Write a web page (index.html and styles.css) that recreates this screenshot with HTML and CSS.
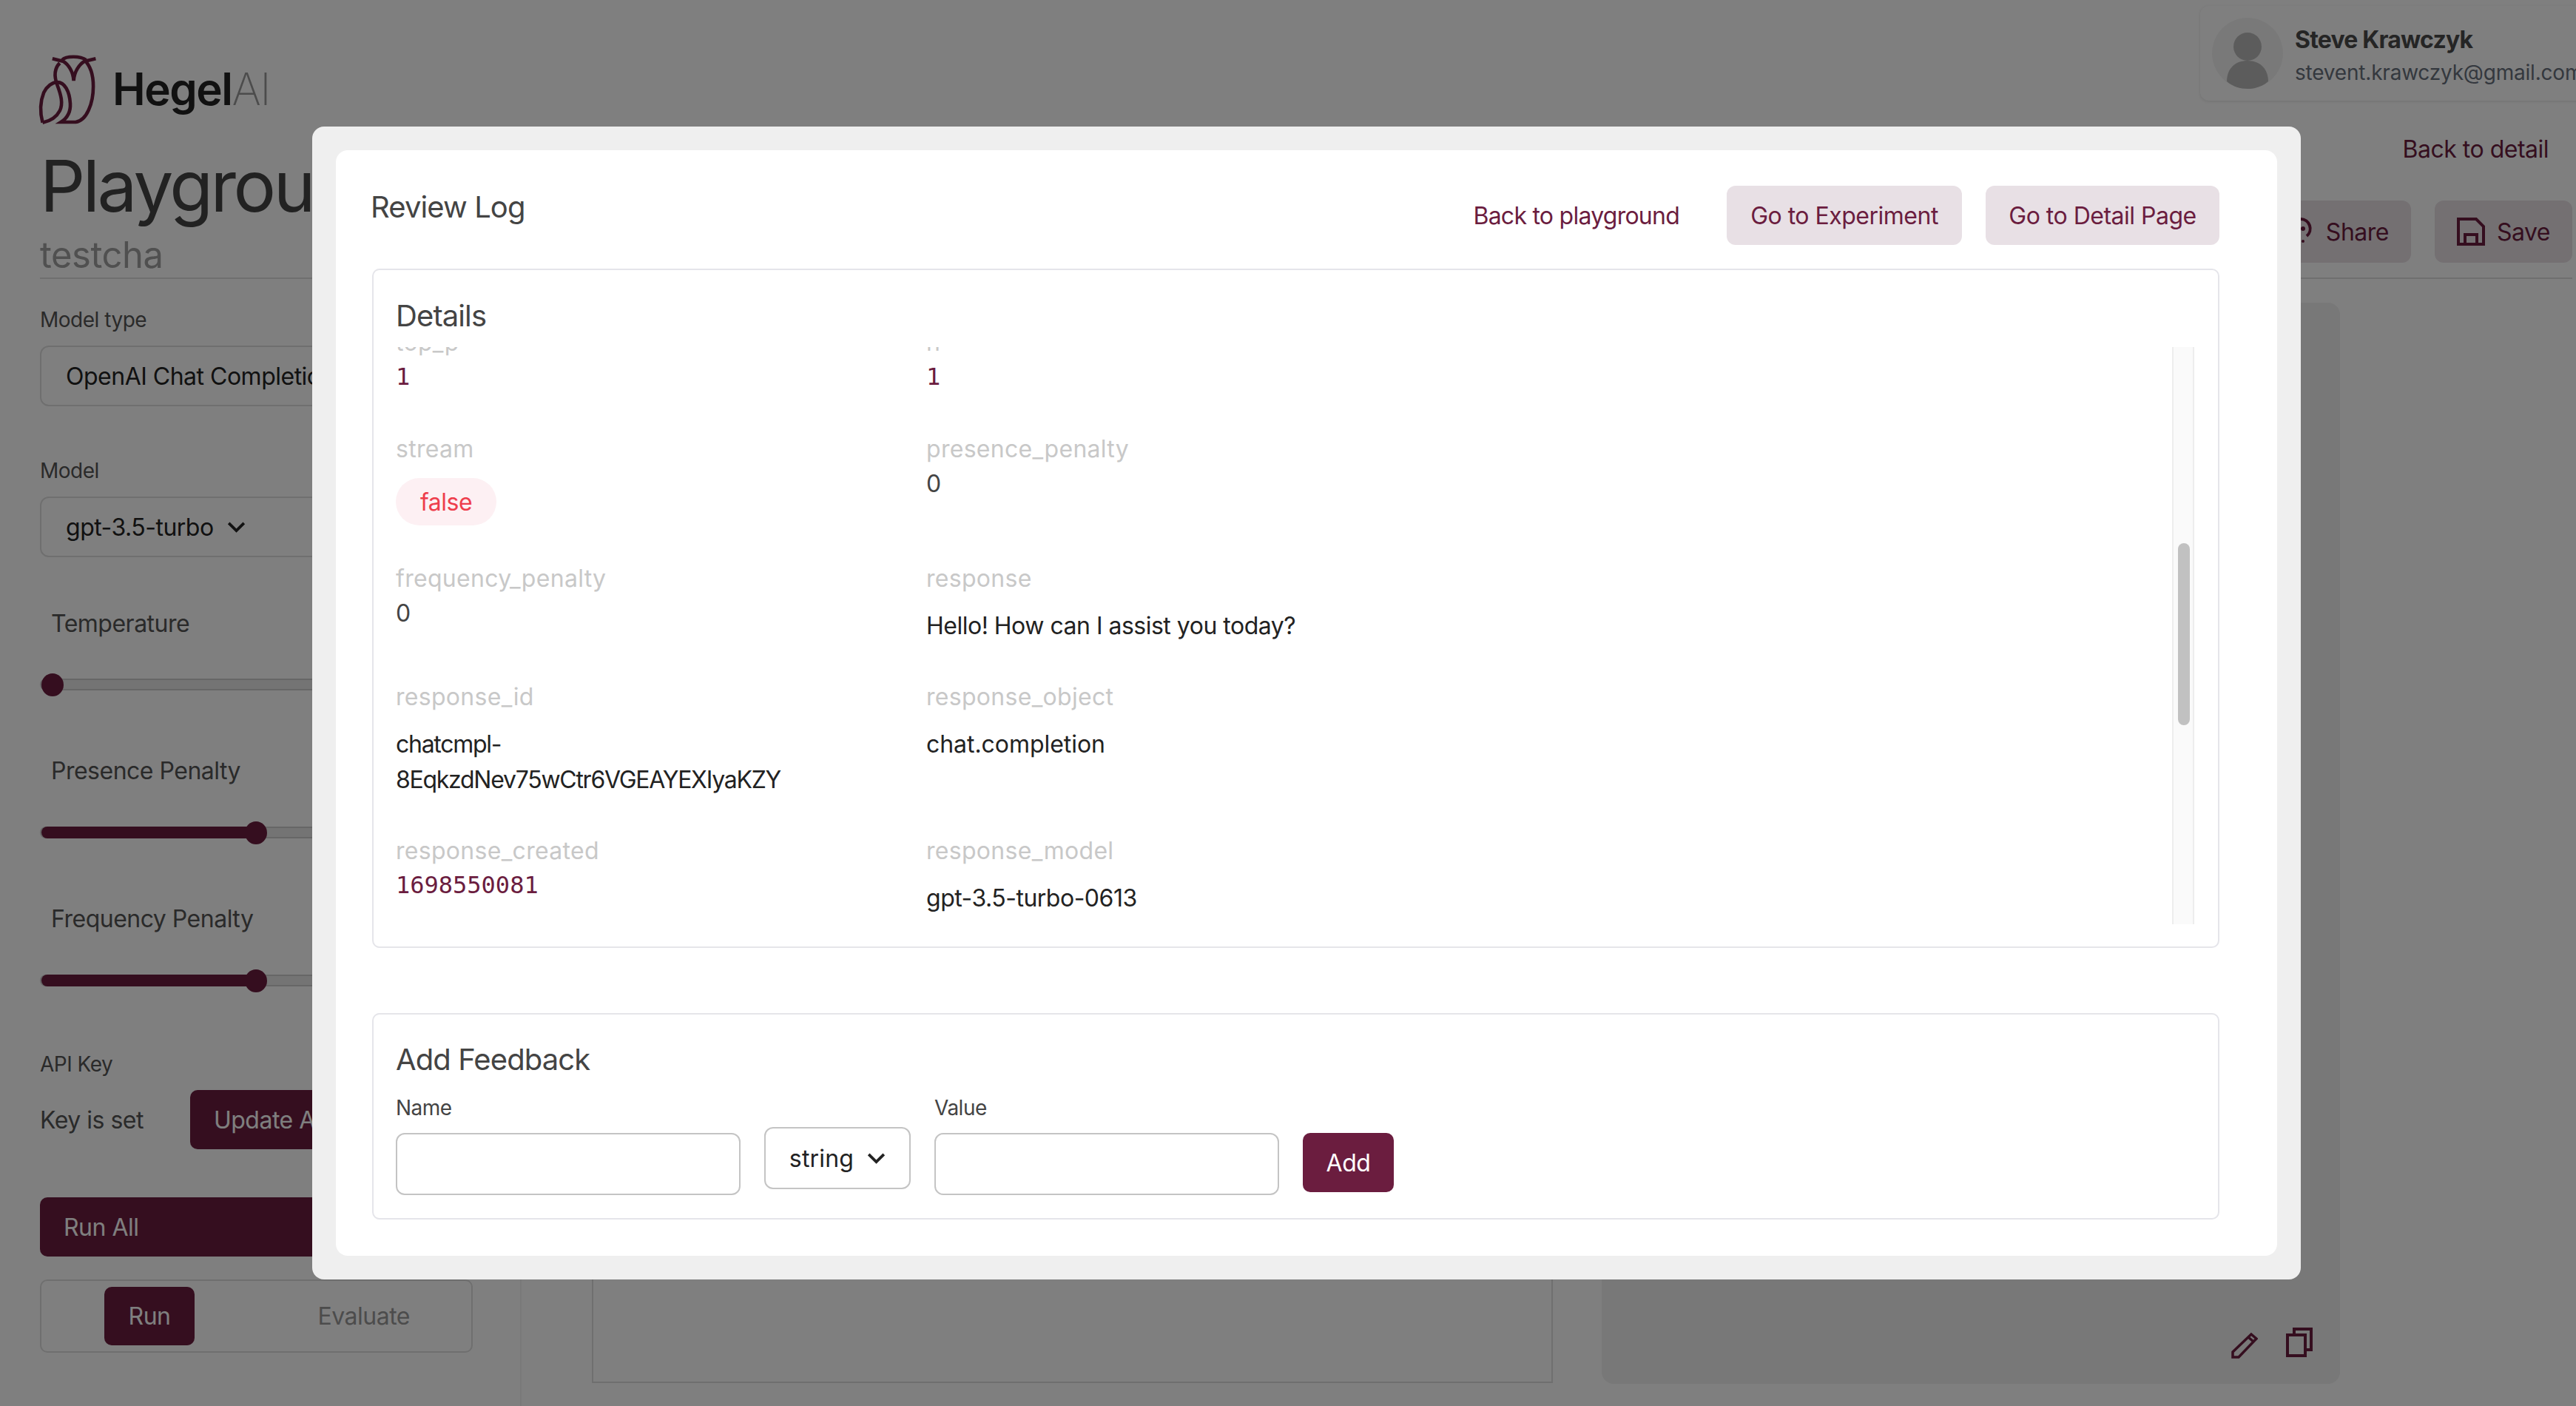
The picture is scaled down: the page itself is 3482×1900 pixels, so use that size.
FILE: index.html
```html
<!DOCTYPE html>
<html lang="en">

<head>
    <meta charset="UTF-8">
    <title>Playground - Hegel AI</title>
    <link rel="stylesheet" href="styles.css">
</head>

<body>
    <div class="page">
        <header class="topbar">
            <div class="logo">
                <svg class="logo-owl" viewBox="45 38 228 284" fill="none" stroke="#6b1d3f" stroke-width="14">
                    <path d="M95 57 L140 68 C160 80 180 110 182 147 C184 110 205 80 225 68 L272 57" />
                    <path d="M135 62 C150 45 210 45 232 62" />
                    <path d="M55 318 C45 280 42 240 60 195 C72 170 95 153 115 153 C145 153 165 190 168 240 C170 275 155 300 130 316 H190 C235 310 262 240 262 170 C262 120 250 85 225 62" />
                    <path d="M125 75 C105 95 100 125 115 165 C130 205 140 240 125 270 C112 295 85 312 55 318" />
                </svg>
                <span class="logo-name">Hegel<span class="logo-ai">AI</span></span>
            </div>
            <div class="user-chip">
                <svg class="avatar" viewBox="0 0 96 96">
                    <circle cx="48" cy="48" r="48" fill="#f3f3f3" />
                    <ellipse cx="48" cy="39" rx="19" ry="19" fill="#b9b9b9" />
                    <path d="M20 86 C20 68 32 58 48 58 C64 58 76 68 76 86 C68 93 58 96 48 96 C38 96 28 93 20 86 Z" fill="#b9b9b9" />
                </svg>
                <div class="user-text">
                    <div class="user-name">Steve Krawczyk</div>
                    <div class="user-email">stevent.krawczyk@gmail.com</div>
                </div>
            </div>
        </header>

        <section class="titlebar">
            <div>
                <h1>Playground</h1>
                <div class="subtitle">testcha</div>
            </div>
            <div class="title-actions">
                <a class="back-link">Back to detail</a>
                <div class="action-row">
                    <button class="light-btn share-btn">
                        <svg viewBox="0 0 28 38" fill="none" stroke="#6b1d3f" stroke-width="4">
                            <path d="M10 2 A13 13 0 0 1 18 25" />
                            <circle cx="13" cy="15" r="3" fill="#6b1d3f" stroke="none" />
                            <circle cx="13" cy="32" r="2" fill="#6b1d3f" stroke="none" />
                        </svg>
                        Share
                    </button>
                    <button class="light-btn">
                        <svg viewBox="0 0 38 38" fill="none" stroke="#6b1d3f" stroke-width="4">
                            <path d="M2 2 H26 L36 12 V36 H2 Z" />
                            <path d="M11 36 V23 H27 V36" />
                        </svg>
                        Save
                    </button>
                </div>
            </div>
        </section>

        <div class="workspace">
            <aside class="sidebar">
                <label class="field-label">Model type</label>
                <div class="select-box">OpenAI Chat Completion</div>

                <label class="field-label model-label">Model</label>
                <div class="select-box">gpt-3.5-turbo
                    <svg class="chevron" viewBox="0 0 26 16" fill="none" stroke="#222" stroke-width="4">
                        <path d="M2 2 L13 13 L24 2" />
                    </svg>
                </div>

                <div class="slider-label first">Temperature</div>
                <div class="slider first"><span class="slider-fill empty"></span><span class="slider-thumb"></span></div>

                <div class="slider-label">Presence Penalty</div>
                <div class="slider"><span class="slider-fill half"></span><span class="slider-thumb"></span></div>

                <div class="slider-label">Frequency Penalty</div>
                <div class="slider"><span class="slider-fill half"></span><span class="slider-thumb"></span></div>

                <label class="field-label api-label">API Key</label>
                <div class="key-row">
                    <span>Key is set</span>
                    <button class="dark-btn update-btn">Update API Key</button>
                </div>

                <button class="dark-btn run-all">Run All</button>

                <div class="tab-box">
                    <span class="tab active">Run</span>
                    <span class="tab">Evaluate</span>
                </div>
            </aside>

            <main class="main-area">
                <div class="prompt-box"></div>
                <div class="result-card">
                    <svg class="card-icon" viewBox="0 0 36 36" fill="none" stroke="#6b1d3f" stroke-width="3.5">
                        <path d="M2 34 V27 L27 3 L34 9 L10 34 Z M23 7 L30 13" />
                    </svg>
                    <svg class="card-icon copy-icon" viewBox="0 0 36 40" fill="none" stroke="#6b1d3f" stroke-width="4">
                        <path d="M2 10 H26 V38 H2 Z M11 10 V2 H34 V30 H26" />
                    </svg>
                </div>
            </main>
        </div>
    </div>

    <div class="overlay"></div>

    <div class="modal">
        <div class="modal-inner">
            <div class="modal-head">
                <h2>Review Log</h2>
                <div class="modal-actions">
                    <a class="plain-link">Back to playground</a>
                    <button class="tint-btn btn-experiment">Go to Experiment</button>
                    <button class="tint-btn btn-detail">Go to Detail Page</button>
                </div>
            </div>

            <div class="card details-card">
                <h3>Details</h3>
                <div class="scroll-view">
                    <div class="log-grid">
                        <div class="log-first"><div class="log-key">top_p</div><div class="log-num">1</div></div>
                        <div class="log-first"><div class="log-key">n</div><div class="log-num">1</div></div>

                        <div><div class="log-key">stream</div><span class="pill-false">false</span></div>
                        <div><div class="log-key">presence_penalty</div><div class="log-plain">0</div></div>

                        <div><div class="log-key">frequency_penalty</div><div class="log-plain">0</div></div>
                        <div><div class="log-key">response</div><p class="log-text">Hello! How can I assist you today?</p></div>

                        <div><div class="log-key">response_id</div><p class="log-text log-id">chatcmpl-<br>8EqkzdNev75wCtr6VGEAYEXIyaKZY</p></div>
                        <div><div class="log-key">response_object</div><p class="log-text log-wide">chat.completion</p></div>

                        <div><div class="log-key">response_created</div><div class="log-num">1698550081</div></div>
                        <div><div class="log-key">response_model</div><p class="log-text">gpt-3.5-turbo-0613</p></div>
                    </div>
                    <div class="fake-scrollbar"><span class="fake-thumb"></span></div>
                </div>
            </div>

            <div class="card feedback-card">
                <h3>Add Feedback</h3>
                <div class="feedback-row">
                    <div class="input-group">
                        <label>Name</label>
                        <input type="text">
                    </div>
                    <div class="type-select">string
                        <svg class="chevron" viewBox="0 0 26 16" fill="none" stroke="#222" stroke-width="4">
                            <path d="M2 2 L13 13 L24 2" />
                        </svg>
                    </div>
                    <div class="input-group">
                        <label>Value</label>
                        <input type="text">
                    </div>
                    <button class="add-btn">Add</button>
                </div>
            </div>
        </div>
    </div>
</body>

</html>
```

FILE: styles.css
```css
:root {
    --wine: #6b1d3f;
    --wine-tint: #e8e0e5;
    --line: #e5e5ea;
    --field-line: #c4c4c4;
}

* {
    box-sizing: border-box;
}

html,
body {
    margin: 0;
    height: 1900px;
    overflow: hidden;
    background: #fff;
    font-family: "Inter", "Open Sans", sans-serif;
    letter-spacing: -0.5px;
    color: #222;
}

button {
    font: inherit;
    letter-spacing: inherit;
    border: 0;
}

/* --- page behind the dialog --- */
.page {
    width: 3482px;
    height: 1900px;
    padding: 8px 5px 0 54px;
    overflow: hidden;
}

.topbar {
    display: flex;
    justify-content: space-between;
    align-items: flex-start;
    height: 128px;
}

.logo {
    display: flex;
    align-items: center;
    gap: 22px;
    margin-top: 65px;
}

.logo-owl {
    width: 76px;
    height: 94px;
    overflow: visible;
}

.logo-name {
    font-size: 60px;
    font-weight: 600;
    color: #222;
    letter-spacing: -1.5px;
}

.logo-ai {
    color: #999;
    font-weight: 200;
}

.user-chip {
    display: flex;
    align-items: center;
    gap: 16px;
    width: 523px;
    height: 128px;
    margin-right: -20px;
    padding-left: 16px;
    border-radius: 12px;
    box-shadow: 0 1px 4px rgba(0, 0, 0, 0.12);
    flex: none;
}

.avatar {
    width: 96px;
    height: 96px;
    flex: none;
}

.user-text {
    padding-top: 8px;
}

.user-name {
    font-size: 32px;
    font-weight: 700;
    line-height: 44px;
    letter-spacing: -0.8px;
    color: #4a4a4a;
}

.user-email {
    font-size: 28px;
    line-height: 44px;
    letter-spacing: -0.2px;
    color: #68707c;
    white-space: nowrap;
}

.titlebar {
    display: flex;
    justify-content: space-between;
    height: 241px;
    border-bottom: 2px solid #dedede;
}

h1 {
    margin: 53px 0 0;
    font-size: 96px;
    font-weight: 400;
    line-height: 124px;
    letter-spacing: -3.5px;
    color: #444;
}

.subtitle {
    margin-top: 4px;
    font-size: 49px;
    line-height: 56px;
    color: #a0a0a0;
}

.title-actions {
    display: flex;
    flex-direction: column;
    align-items: flex-end;
}

.back-link {
    margin: 44px 32px 0 0;
    font-size: 32px;
    line-height: 44px;
    color: var(--wine);
}

.action-row {
    display: flex;
    gap: 32px;
    margin-top: 47px;
}

.light-btn {
    display: flex;
    align-items: center;
    gap: 16px;
    height: 84px;
    padding: 0 30px;
    border-radius: 12px;
    background: var(--wine-tint);
    color: var(--wine);
    font-size: 32px;
}

.light-btn svg {
    width: 38px;
    height: 38px;
}

.share-btn svg {
    width: 28px;
}

.workspace {
    display: flex;
}

.sidebar {
    flex: none;
    width: 651px;
    height: 1600px;
    padding-right: 66px;
    border-right: 2px solid #f3f3f3;
}

.field-label {
    display: block;
    margin-top: 37px;
    font-size: 28px;
    line-height: 36px;
    color: #555;
}

.model-label {
    margin-top: 69px;
}

.select-box {
    display: flex;
    align-items: center;
    gap: 18px;
    height: 82px;
    margin-top: 17px;
    padding-left: 33px;
    width: 700px;
    border: 2px solid #dedede;
    border-radius: 12px;
    font-size: 32px;
    color: #222;
    white-space: nowrap;
}

.chevron {
    width: 25px;
    height: 15px;
}

.slider-label {
    margin: 87px 0 0 15px;
    font-size: 32px;
    line-height: 44px;
    color: #555;
}

.slider-label.first {
    margin-top: 68px;
}

.slider {
    display: flex;
    align-items: center;
    width: 700px;
    height: 16px;
    margin-top: 53px;
    border: 2px solid #ccc;
    border-radius: 8px;
    background: #e8e8e8;
}

.slider.first {
    margin-top: 52px;
}

.slider-fill {
    height: 16px;
    background: var(--wine);
    border-radius: 8px 0 0 8px;
}

.slider-fill.empty {
    width: 15px;
    background: none;
}

.slider-fill.half {
    width: 290px;
}

.slider-thumb {
    width: 30px;
    height: 31px;
    margin-left: -15px;
    border-radius: 50%;
    background: var(--wine);
    flex: none;
}

.api-label {
    margin-top: 87px;
}

.key-row {
    display: flex;
    align-items: center;
    gap: 63px;
    margin-top: 17px;
    font-size: 32px;
    color: #555;
    white-space: nowrap;
}

.dark-btn {
    height: 80px;
    padding: 0 32px;
    border-radius: 10px;
    background: var(--wine);
    color: #fff;
    font-size: 32px;
    text-align: left;
    white-space: nowrap;
}

.update-btn {
    flex: none;
    width: 400px;
}

.run-all {
    display: block;
    width: 584px;
    margin-top: 65px;
}

.tab-box {
    display: flex;
    justify-content: space-between;
    align-items: center;
    width: 585px;
    height: 99px;
    margin-top: 31px;
    padding: 0 83px 0 85px;
    border: 2px solid #dedede;
    border-radius: 10px;
    font-size: 32px;
    color: #999;
}

.tab.active {
    display: flex;
    align-items: center;
    justify-content: center;
    width: 122px;
    height: 79px;
    border-radius: 10px;
    background: var(--wine);
    color: #fff;
}

.main-area {
    display: flex;
    gap: 66px;
    padding: 32px 0 0 95px;
}

.prompt-box {
    width: 1299px;
    height: 1460px;
    border: 2px solid #dedede;
}

.result-card {
    display: flex;
    justify-content: flex-end;
    align-items: flex-end;
    gap: 38px;
    width: 998px;
    height: 1461px;
    padding: 0 37px 34px 0;
    border-radius: 16px;
    background: #f0f0f0;
}

.card-icon {
    width: 36px;
    height: 36px;
}

.copy-icon {
    height: 40px;
    margin-bottom: 2px;
}

.overlay {
    position: fixed;
    inset: 0;
    background: rgba(0, 0, 0, 0.5);
}

/* --- Review Log dialog --- */
.modal {
    position: fixed;
    left: 422px;
    top: 171px;
    width: 2688px;
    height: 1558px;
    padding: 32px;
    border-radius: 16px;
    background: #efefef;
}

.modal-inner {
    height: 100%;
    padding: 48px 78px 0 49px;
    border-radius: 16px;
    background: #fff;
}

.modal-head {
    display: flex;
    justify-content: space-between;
    align-items: flex-start;
    height: 112px;
}

h2 {
    margin: 1px 0 0 -2px;
    font-size: 40px;
    line-height: 56px;
    font-weight: 400;
    letter-spacing: -0.9px;
    color: #444;
}

.modal-actions {
    display: flex;
    align-items: center;
    gap: 32px;
}

.plain-link {
    margin-right: 32px;
    font-size: 32px;
    letter-spacing: -0.75px;
    color: var(--wine);
}

.tint-btn {
    height: 80px;
    padding: 0;
    border-radius: 12px;
    background: var(--wine-tint);
    color: var(--wine);
    font-size: 32px;
}

.btn-experiment {
    width: 318px;
}

.btn-detail {
    width: 316px;
}

.card {
    border: 2px solid var(--line);
    border-radius: 10px;
    padding: 0 30px;
}

h3 {
    margin: 0;
    font-size: 40px;
    line-height: 56px;
    font-weight: 400;
    letter-spacing: -0.9px;
    color: #444;
}

.details-card {
    height: 918px;
    padding-top: 34px;
}

.scroll-view {
    position: relative;
    height: 780px;
    margin-top: 14px;
    overflow: hidden;
}

.log-grid {
    display: grid;
    grid-template-columns: 717px 1fr;
    row-gap: 52px;
    margin-top: -26px;
}

.log-first {
    padding-bottom: 2px;
}

.log-key {
    font-size: 32px;
    line-height: 40px;
    letter-spacing: 0.3px;
    color: #c8c8c8;
}

.log-num {
    margin-top: 2px;
    font-family: "DejaVu Sans Mono", monospace;
    font-size: 32px;
    line-height: 48px;
    letter-spacing: 0;
    color: var(--wine);
}

.log-plain {
    margin-top: 3px;
    font-size: 32px;
    line-height: 48px;
    color: #444;
}

.log-text {
    margin: 20px 0 0;
    font-size: 32px;
    line-height: 48px;
    color: #222;
}

.log-id {
    letter-spacing: -1.27px;
}

.log-wide {
    letter-spacing: -0.05px;
}

.pill-false {
    display: flex;
    align-items: center;
    justify-content: center;
    width: 136px;
    height: 64px;
    margin-top: 19px;
    border-radius: 32px;
    background: #fdf0f3;
    color: #ee3e4c;
    font-size: 32px;
}

.fake-scrollbar {
    position: absolute;
    top: 0;
    right: 2px;
    width: 30px;
    height: 780px;
    background: #fafafa;
    border-left: 2px solid #ededed;
    border-right: 2px solid #ededed;
}

.fake-thumb {
    position: absolute;
    top: 265px;
    left: 6px;
    width: 16px;
    height: 246px;
    border-radius: 8px;
    background: #c1c1c1;
}

.feedback-card {
    height: 279px;
    margin-top: 88px;
    padding-top: 33px;
}

.feedback-row {
    display: flex;
    align-items: flex-start;
    gap: 32px;
    margin-top: 19px;
}

.input-group label {
    display: block;
    font-size: 28px;
    line-height: 36px;
    color: #444;
}

.input-group input {
    display: block;
    width: 466px;
    height: 84px;
    margin-top: 16px;
    border: 2px solid var(--field-line);
    border-radius: 12px;
    background: #fff;
}

.type-select {
    display: flex;
    align-items: center;
    justify-content: center;
    gap: 18px;
    width: 198px;
    height: 84px;
    margin-top: 44px;
    border: 2px solid var(--field-line);
    border-radius: 12px;
    font-size: 32px;
    letter-spacing: 0.2px;
    color: #222;
}

.add-btn {
    width: 123px;
    height: 80px;
    margin-top: 52px;
    border-radius: 10px;
    background: var(--wine);
    color: #fff;
    font-size: 32px;
}
```
